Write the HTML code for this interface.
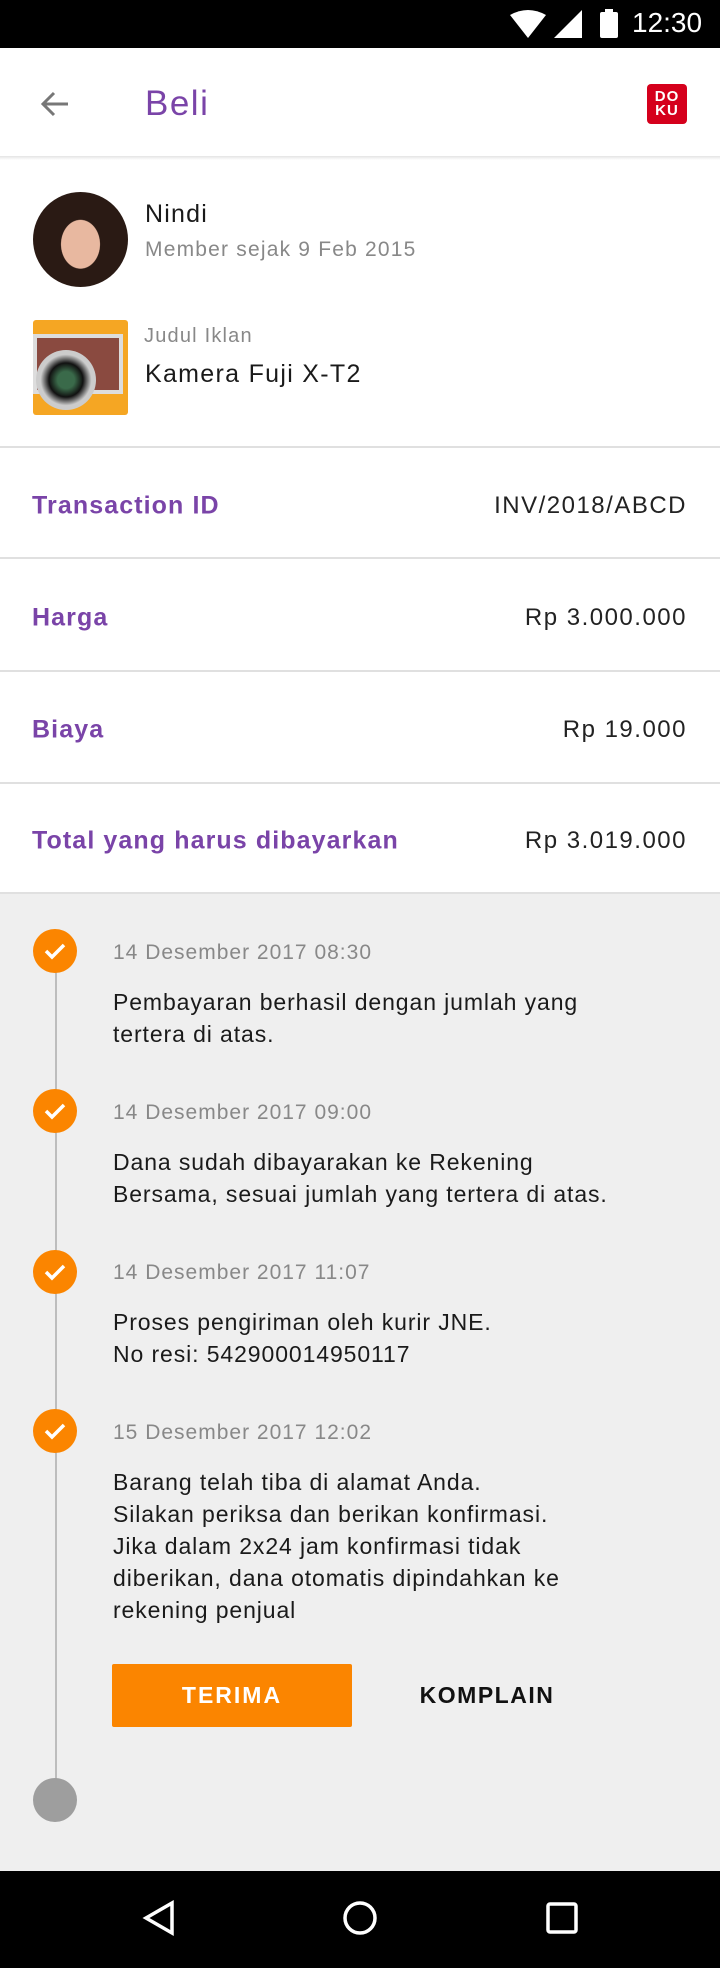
<!DOCTYPE html>
<html><head><meta charset="utf-8"><style>
*{margin:0;padding:0;box-sizing:border-box}
body{width:720px;height:1968px;position:relative;background:#fff;font-family:"Liberation Sans",sans-serif;overflow:hidden}
.abs{position:absolute}
.hr{position:absolute;left:0;width:720px;height:2px;background:#e0e0e0}
.lbl{position:absolute;left:32px;font-size:25px;font-weight:bold;color:#7a44a8;transform:translateY(-50%);letter-spacing:1.1px}
.val{position:absolute;right:33px;font-size:24px;color:#222;transform:translateY(-50%);letter-spacing:1.5px}
.dot{position:absolute;left:33px;width:44px;height:44px;border-radius:50%;background:#fb8500}
.date{position:absolute;left:113px;font-size:21px;color:#888;transform:translateY(-50%);letter-spacing:1px}
.txt{position:absolute;left:113px;font-size:23px;color:#1a1a1a;line-height:32px;letter-spacing:0.9px}
</style></head><body>
<div class="abs" style="left:0;top:0;width:720px;height:48px;background:#000"></div>
<svg class="abs" style="left:510px;top:10px" width="36" height="28" viewBox="0 0 36 28"><path d="M0 5 Q18 -5 36 5 L18 28Z" fill="#fff"/></svg>
<svg class="abs" style="left:554px;top:10px" width="28" height="28"><path d="M28 0V28H0Z" fill="#fff"/></svg>
<div class="abs" style="left:600px;top:12px;width:18px;height:26px;background:#fff;border-radius:2px"></div>
<div class="abs" style="left:605px;top:9px;width:8px;height:4px;background:#fff"></div>
<div class="abs" style="left:632px;top:7px;font-size:28px;color:#fff">12:30</div>

<svg class="abs" style="left:40px;top:90px" width="30" height="28" viewBox="0 0 30 28"><path d="M28 14H4M14 3L3 14l11 11" stroke="#777" stroke-width="3" fill="none"/></svg>
<div class="abs" style="left:145px;top:84px;font-size:35px;color:#7a44a8;letter-spacing:1.5px">Beli</div>
<div class="abs" style="left:647px;top:84px;width:40px;height:40px;background:#d5001c;border-radius:4px;color:#fff;font-size:15px;font-weight:bold;line-height:14px;text-align:center;padding-top:6px;letter-spacing:1px">DO<br>KU</div>
<div class="abs" style="left:0;top:156px;width:720px;height:4px;background:linear-gradient(#e4e4e4,#fff)"></div>

<div class="abs" style="left:33px;top:192px;width:95px;height:95px;border-radius:50%;background:radial-gradient(ellipse 32px 40px at 50% 55%,#e8b8a0 60%,#2a1a14 62%);"></div>
<div class="abs" style="left:145px;top:200px;font-size:25px;color:#1a1a1a;letter-spacing:1.2px">Nindi</div>
<div class="abs" style="left:145px;top:238px;font-size:21px;color:#888;letter-spacing:1.2px">Member sejak 9 Feb 2015</div>
<div class="abs" style="left:33px;top:320px;width:95px;height:95px;border-radius:3px;background:#f5a623;overflow:hidden">
<div class="abs" style="left:0;top:14px;width:90px;height:60px;background:#8a4a40;border:4px solid #ddd"></div>
<div class="abs" style="left:3px;top:30px;width:60px;height:60px;border-radius:50%;background:radial-gradient(#3a6a4a 20%,#111 40%,#ccc 60%)"></div></div>
<div class="abs" style="left:144px;top:325px;font-size:20px;color:#888;letter-spacing:1.2px">Judul Iklan</div>
<div class="abs" style="left:145px;top:360px;font-size:25px;color:#1a1a1a;letter-spacing:1.3px">Kamera Fuji X-T2</div>
<div class="hr" style="top:446px"></div>

<div class="lbl" style="top:506px">Transaction ID</div><div class="val" style="top:506px">INV/2018/ABCD</div>
<div class="hr" style="top:557px"></div>
<div class="lbl" style="top:618px">Harga</div><div class="val" style="top:618px">Rp 3.000.000</div>
<div class="hr" style="top:670px"></div>
<div class="lbl" style="top:730px">Biaya</div><div class="val" style="top:730px">Rp 19.000</div>
<div class="hr" style="top:782px"></div>
<div class="lbl" style="top:841px">Total yang harus dibayarkan</div><div class="val" style="top:841px">Rp 3.019.000</div>
<div class="hr" style="top:892px"></div>

<div class="abs" style="left:0;top:894px;width:720px;height:977px;background:#efefef"></div>
<div class="abs" style="left:55px;top:950px;width:2px;height:850px;background:#bdbdbd"></div>

<div class="dot" style="top:929px"></div>
<div class="dot" style="top:1089px"></div>
<div class="dot" style="top:1250px"></div>
<div class="dot" style="top:1409px"></div>
<svg class="abs" style="left:33px;top:929px" width="44" height="540"><g stroke="#fff" stroke-width="3.5" fill="none"><path d="M13 22l6 6 12-12"/><path d="M13 182l6 6 12-12"/><path d="M13 343l6 6 12-12"/><path d="M13 502l6 6 12-12"/></g></svg>
<div class="abs" style="left:33px;top:1778px;width:44px;height:44px;border-radius:50%;background:#9e9e9e"></div>

<div class="date" style="top:953px">14 Desember 2017 08:30</div>
<div class="txt" style="top:986px">Pembayaran berhasil dengan jumlah yang<br>tertera di atas.</div>
<div class="date" style="top:1113px">14 Desember 2017 09:00</div>
<div class="txt" style="top:1146px">Dana sudah dibayarakan ke Rekening<br>Bersama, sesuai jumlah yang tertera di atas.</div>
<div class="date" style="top:1273px">14 Desember 2017 11:07</div>
<div class="txt" style="top:1306px">Proses pengiriman oleh kurir JNE.<br>No resi: 542900014950117</div>
<div class="date" style="top:1433px">15 Desember 2017 12:02</div>
<div class="txt" style="top:1466px">Barang telah tiba di alamat Anda.<br>Silakan periksa dan berikan konfirmasi.<br>Jika dalam 2x24 jam konfirmasi tidak<br>diberikan, dana otomatis dipindahkan ke<br>rekening penjual</div>

<div class="abs" style="left:112px;top:1664px;width:240px;height:63px;background:#fb8500;border-radius:2px;color:#fff;font-size:23px;font-weight:bold;letter-spacing:2px;text-align:center;line-height:63px">TERIMA</div>
<div class="abs" style="left:387px;top:1664px;width:200px;height:63px;color:#111;font-size:23px;font-weight:bold;letter-spacing:1.5px;text-align:center;line-height:63px">KOMPLAIN</div>

<div class="abs" style="left:0;top:1871px;width:720px;height:97px;background:#000"></div>
<svg class="abs" style="left:140px;top:1898px" width="440" height="40"><g stroke="#fff" stroke-width="3.5" fill="none"><path d="M32 5L6 20l26 15z"/><circle cx="220" cy="20" r="15"/><rect x="408" y="6" width="28" height="28" rx="2"/></g></svg>
</body></html>
